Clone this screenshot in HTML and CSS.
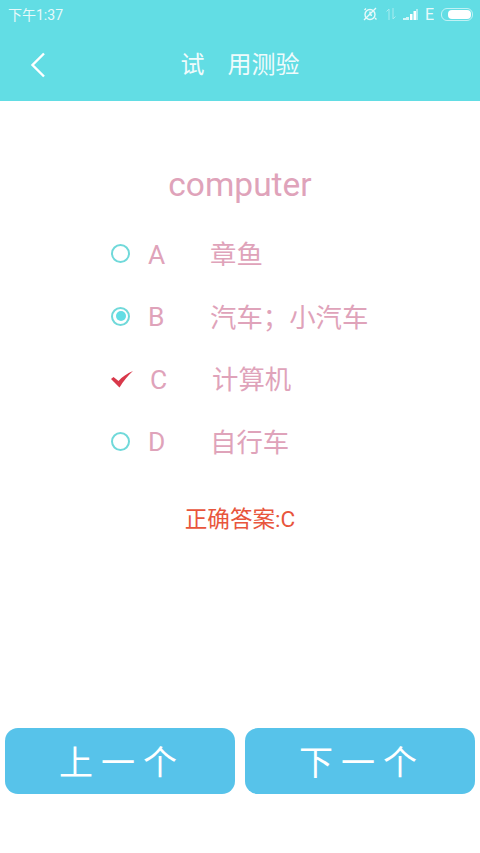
FILE: index.html
```html
<!DOCTYPE html>
<html lang="zh-CN">
<head>
    <meta charset="UTF-8">
    <meta name="viewport" content="width=device-width, initial-scale=1.0">
    <title>试用测验</title>
    <link rel="stylesheet" href="styles.css">
</head>
<body>
    <div class="top">
        <div class="status-bar">
            <span class="time">下午1:37</span>
            <div class="status-icons">
                <svg class="icon-alarm" width="16" height="16" viewBox="0 0 16 16" fill="none" stroke="#fff" stroke-width="1.4">
                    <circle cx="8" cy="8.5" r="5"/>
                    <path d="M2 14 14 2M8 5.5v3l2 1M2.5 4 4 2.5M13 12l1.5 1.5"/>
                </svg>
                <svg class="icon-data" width="12" height="14" viewBox="0 0 12 14" fill="none" stroke="#fff" stroke-width="1" opacity="0.45">
                    <path d="M4 13V2M1.5 4.5 4 2M8 1v11M8 12l2.500-2.500"/>
                </svg>
                <svg class="icon-signal" width="15" height="11" viewBox="0 0 15 11" fill="#fff">
                    <rect x="0" y="9" width="3" height="2" opacity="0.7"/>
                    <rect x="3" y="8" width="3" height="3" opacity="0.7"/>
                    <rect x="7" y="5" width="2.500" height="6"/>
                    <rect x="10.500" y="2" width="2.500" height="9"/>
                    <rect x="13" y="0" width="2" height="11" opacity="0.5"/>
                </svg>
                <span class="net">E</span>
                <div class="battery"><div class="battery-level"></div></div>
            </div>
        </div>
        <div class="title-bar">
            <svg class="back" width="16" height="26" viewBox="0 0 16 26" fill="none" stroke="#fff" stroke-width="2.400">
                <path d="M14 1.500 2.500 13 14 24.500"/>
            </svg>
            <h1 class="title">试<span class="title-gap"></span>用测验</h1>
        </div>
    </div>

    <main class="quiz">
        <h2 class="word">computer</h2>
        <ul class="options">
            <li class="option">
                <span class="radio"></span>
                <span class="letter">A</span>
                <span class="meaning">章鱼</span>
            </li>
            <li class="option">
                <span class="radio checked"></span>
                <span class="letter">B</span>
                <span class="meaning">汽车；小汽车</span>
            </li>
            <li class="option correct">
                <svg class="tick" width="22" height="18" viewBox="0 0 22 18" fill="#d8384a">
                    <path d="M0 9 2.500 7 7.500 11C11 7 16 3.500 22 1 17 5.500 12.500 11 8.500 17.500Z"/>
                </svg>
                <span class="letter">C</span>
                <span class="meaning">计算机</span>
            </li>
            <li class="option">
                <span class="radio"></span>
                <span class="letter">D</span>
                <span class="meaning">自行车</span>
            </li>
        </ul>
        <p class="answer">正确答案:C</p>
    </main>

    <div class="buttons">
        <button class="nav-btn">上一个</button>
        <button class="nav-btn">下一个</button>
    </div>
</body>
</html>
```

FILE: styles.css
```css
* {
    box-sizing: border-box;
}
body {
    margin: 0;
    width: 480px;
    height: 853px;
    display: flex;
    flex-direction: column;
    background-color: #fff;
    font-family: Roboto, "Noto Sans CJK SC", sans-serif;
    overflow: hidden;
}
.top {
    height: 101px;
    background-color: #62dde4;
    color: #fff;
}
.status-bar {
    height: 28px;
    padding: 0 7px 0 8px;
    display: flex;
    align-items: center;
    justify-content: space-between;
}
.time {
    font-size: 14px;
    opacity: 0.85;
}
.status-icons {
    display: flex;
    align-items: center;
}
.icon-alarm {
    margin-right: 7px;
    opacity: 0.85;
}
.icon-data {
    margin-right: 6px;
}
.icon-signal {
    margin-right: 7px;
}
.net {
    font-size: 16px;
    margin-right: 7px;
    opacity: 0.85;
}
.battery {
    width: 32px;
    height: 13px;
    border: 1px solid rgba(255, 255, 255, 0.6);
    border-radius: 6px;
    padding: 1px 1px 1px 6px;
}
.battery-level {
    height: 100%;
    background-color: #fff;
    border-radius: 4px;
}
.title-bar {
    height: 73px;
    padding-left: 30px;
    display: flex;
    align-items: center;
}
.title {
    flex: 1;
    margin: 0 46px 0 0;
    padding-bottom: 5px;
    text-align: center;
    font-size: 24px;
    font-weight: 400;
    opacity: 0.9;
}
.title-gap {
    display: inline-block;
    width: 23px;
}
.quiz {
    flex: 1;
    padding-top: 64px;
}
.word {
    margin: 0;
    text-align: center;
    font-size: 33.500px;
    font-weight: 400;
    line-height: 40px;
    color: #dfa3ba;
}
.options {
    list-style: none;
    margin: 17.500px 0 0;
    padding: 0 0 0 111px;
}
.option {
    height: 62.500px;
    display: flex;
    align-items: center;
    font-size: 26.400px;
    font-weight: 400;
    color: #dfa3ba;
}
.radio {
    width: 19px;
    height: 19px;
    margin-right: 18px;
    flex: none;
    border: 2px solid #70d9da;
    border-radius: 50%;
    display: flex;
    align-items: center;
    justify-content: center;
}
.radio.checked::after {
    content: "";
    width: 10px;
    height: 10px;
    border-radius: 50%;
    background-color: #62dde4;
}
.letter {
    width: 62px;
    flex: none;
    padding-top: 2px;
}
.meaning {
    padding-bottom: 2px;
}
.tick {
    margin-right: 17px;
    flex: none;
}
.answer {
    margin: 31.500px 0 0;
    text-align: center;
    font-size: 22.600px;
    font-weight: 400;
    line-height: 32px;
    color: #e8553c;
}
.buttons {
    display: flex;
    gap: 10px;
    padding: 0 5px;
    margin-bottom: 59px;
}
.nav-btn {
    flex: 1;
    height: 66px;
    border: none;
    border-radius: 13px;
    background-color: #57c3ea;
    color: #fff;
    font-family: "Noto Sans CJK SC", sans-serif;
    font-size: 34px;
    font-weight: 400;
    letter-spacing: 8px;
    padding: 0 0 2px 4px;
}
```
